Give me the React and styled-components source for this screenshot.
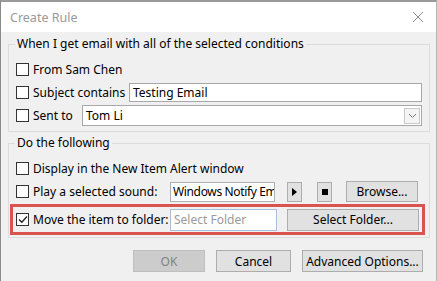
import React from "react";
import styled, { createGlobalStyle } from "styled-components";

const GlobalStyle = createGlobalStyle`
  html, body {
    margin: 0;
    padding: 0;
    background: #f0f0f0;
  }
  body {
    font-family: "Noto Sans", "Open Sans", sans-serif;
    font-size: 12px;
    color: #000;
  }
`;

const Dialog = styled.div`
  width: 437px;
  height: 281px;
  box-sizing: border-box;
  border-left: 1px solid #8a8a8a;
  border-right: 1px solid #b5b5b5;
  border-top: 2px solid #9a9a9a;
  background: #f0f0f0;
  display: flex;
  flex-direction: column;
  overflow: hidden;
`;

const TitleBar = styled.div`
  height: 30px;
  background: #fff;
  display: flex;
  align-items: center;
  justify-content: space-between;
  padding: 0 12px 0 9px;
`;

const TitleText = styled.span`
  color: #9a9a9a;
  font-size: 12.5px;
`;

const Body = styled.div`
  padding: 4px 6px 0 7px;
  display: flex;
  flex-direction: column;
`;

const Group = styled.fieldset`
  margin: 0;
  border: 1px solid #dcdcdc;
  padding: 6px 7px ${(p) => p.$bottom || 4}px 7px;
  display: flex;
  flex-direction: column;
  & + & {
    margin-top: 3px;
  }
`;

const Legend = styled.legend`
  padding: 0 2px;
  margin-left: -1px;
  line-height: 16px;
`;

const Row = styled.div`
  height: 23px;
  display: flex;
  align-items: center;
  white-space: nowrap;
`;

const Highlight = styled.div`
  height: 25px;
  margin: 1px -3px 0 -6px;
  padding-left: 3px;
  border: 3px solid #d9534f;
  display: flex;
  align-items: center;
  white-space: nowrap;
`;

const Box = styled.span`
  width: 11px;
  height: 11px;
  border: 1px solid #333;
  background: #fff;
  flex: none;
  display: flex;
  align-items: center;
  justify-content: center;
  margin-right: 4px;
`;

const Label = styled.span`
  width: ${(p) => (p.$w ? p.$w + "px" : "auto")};
  flex: none;
`;

const Field = styled.div`
  box-sizing: border-box;
  height: ${(p) => p.$h || 20}px;
  width: ${(p) => (p.$w ? p.$w + "px" : "auto")};
  flex: ${(p) => (p.$w ? "none" : "1")};
  background: #fff;
  border: 1px solid ${(p) => p.$border || "#a8a8a8"};
  display: flex;
  align-items: center;
  padding-left: ${(p) => (p.$tight ? 2 : 3)}px;
  letter-spacing: ${(p) => (p.$tight ? "-0.35px" : "normal")};
  color: ${(p) => (p.$placeholder ? "#9a9a9a" : "#000")};
  overflow: hidden;
`;

const DropButton = styled.span`
  margin-left: auto;
  margin-right: 1px;
  width: 16px;
  height: 16px;
  box-sizing: border-box;
  border: 1px solid #c8c8c8;
  background: #f4f4f4;
  display: flex;
  align-items: center;
  justify-content: center;
`;

const Button = styled.div`
  box-sizing: border-box;
  width: ${(p) => p.$w}px;
  height: ${(p) => p.$h || 22}px;
  flex: none;
  background: ${(p) => (p.$disabled ? "#cccccc" : "#e1e1e1")};
  border: 1px solid ${(p) => (p.$disabled ? "#bfbfbf" : "#adadad")};
  color: ${(p) => (p.$disabled ? "#838383" : "#000")};
  display: flex;
  align-items: center;
  justify-content: center;
  margin-left: ${(p) => p.$ml || 0}px;
`;

const Footer = styled.div`
  display: flex;
  justify-content: flex-end;
  gap: 11px;
  padding: 12px 7px 0 0;
`;

const Check = ({ checked }) => (
  <Box>
    {checked && (
      <svg width="10" height="9" viewBox="0 0 10 9">
        <path d="M1 4.5 L3.8 7.3 L9 1.5" fill="none" stroke="#222" strokeWidth="1.3" />
      </svg>
    )}
  </Box>
);

export default function App() {
  return (
    <>
      <GlobalStyle />
      <Dialog>
        <TitleBar>
          <TitleText>Create Rule</TitleText>
          <svg width="12" height="12" viewBox="0 0 12 12">
            <path d="M1 1 L11 11 M11 1 L1 11" stroke="#8c8c8c" strokeWidth="1" />
          </svg>
        </TitleBar>
        <Body>
          <Group>
            <Legend>When I get email with all of the selected conditions</Legend>
            <Row>
              <Check />
              <Label>From Sam Chen</Label>
            </Row>
            <Row>
              <Check />
              <Label $w={96}>Subject contains</Label>
              <Field $h={19}>Testing Email</Field>
            </Row>
            <Row>
              <Check />
              <Label $w={49}>Sent to</Label>
              <Field $h={21}>
                Tom Li
                <DropButton>
                  <svg width="9" height="6" viewBox="0 0 9 6">
                    <path d="M1 1 L4.5 4.5 L8 1" fill="none" stroke="#777" strokeWidth="1" />
                  </svg>
                </DropButton>
              </Field>
            </Row>
          </Group>
          <Group $bottom={2}>
            <Legend>Do the following</Legend>
            <Row>
              <Check />
              <Label>Display in the New Item Alert window</Label>
            </Row>
            <Row>
              <Check />
              <Label $w={137}>Play a selected sound:</Label>
              <Field $w={105} $h={20} $border="#b0b0b0" $tight>Windows Notify Em</Field>
              <Button $w={15} $h={20} $ml={12}>
                <svg width="5" height="8" viewBox="0 0 5 8">
                  <path d="M0 0 L5 4 L0 8 Z" fill="#000" />
                </svg>
              </Button>
              <Button $w={15} $h={20} $ml={15}>
                <svg width="6" height="6" viewBox="0 0 6 6">
                  <rect width="6" height="6" fill="#000" />
                </svg>
              </Button>
              <Button $w={72} $h={21} $ml={14}>Browse...</Button>
            </Row>
            <Highlight>
              <Check checked />
              <Label $w={137}>Move the item to folder:</Label>
              <Field $w={107} $h={22} $border="#a9bfd6" $placeholder>Select Folder</Field>
              <Button $w={132} $h={22} $ml={10}>Select Folder...</Button>
            </Highlight>
          </Group>
          <Footer>
            <Button $w={72} $disabled>OK</Button>
            <Button $w={75}>Cancel</Button>
            <Button $w={121}>Advanced Options...</Button>
          </Footer>
        </Body>
      </Dialog>
    </>
  );
}
